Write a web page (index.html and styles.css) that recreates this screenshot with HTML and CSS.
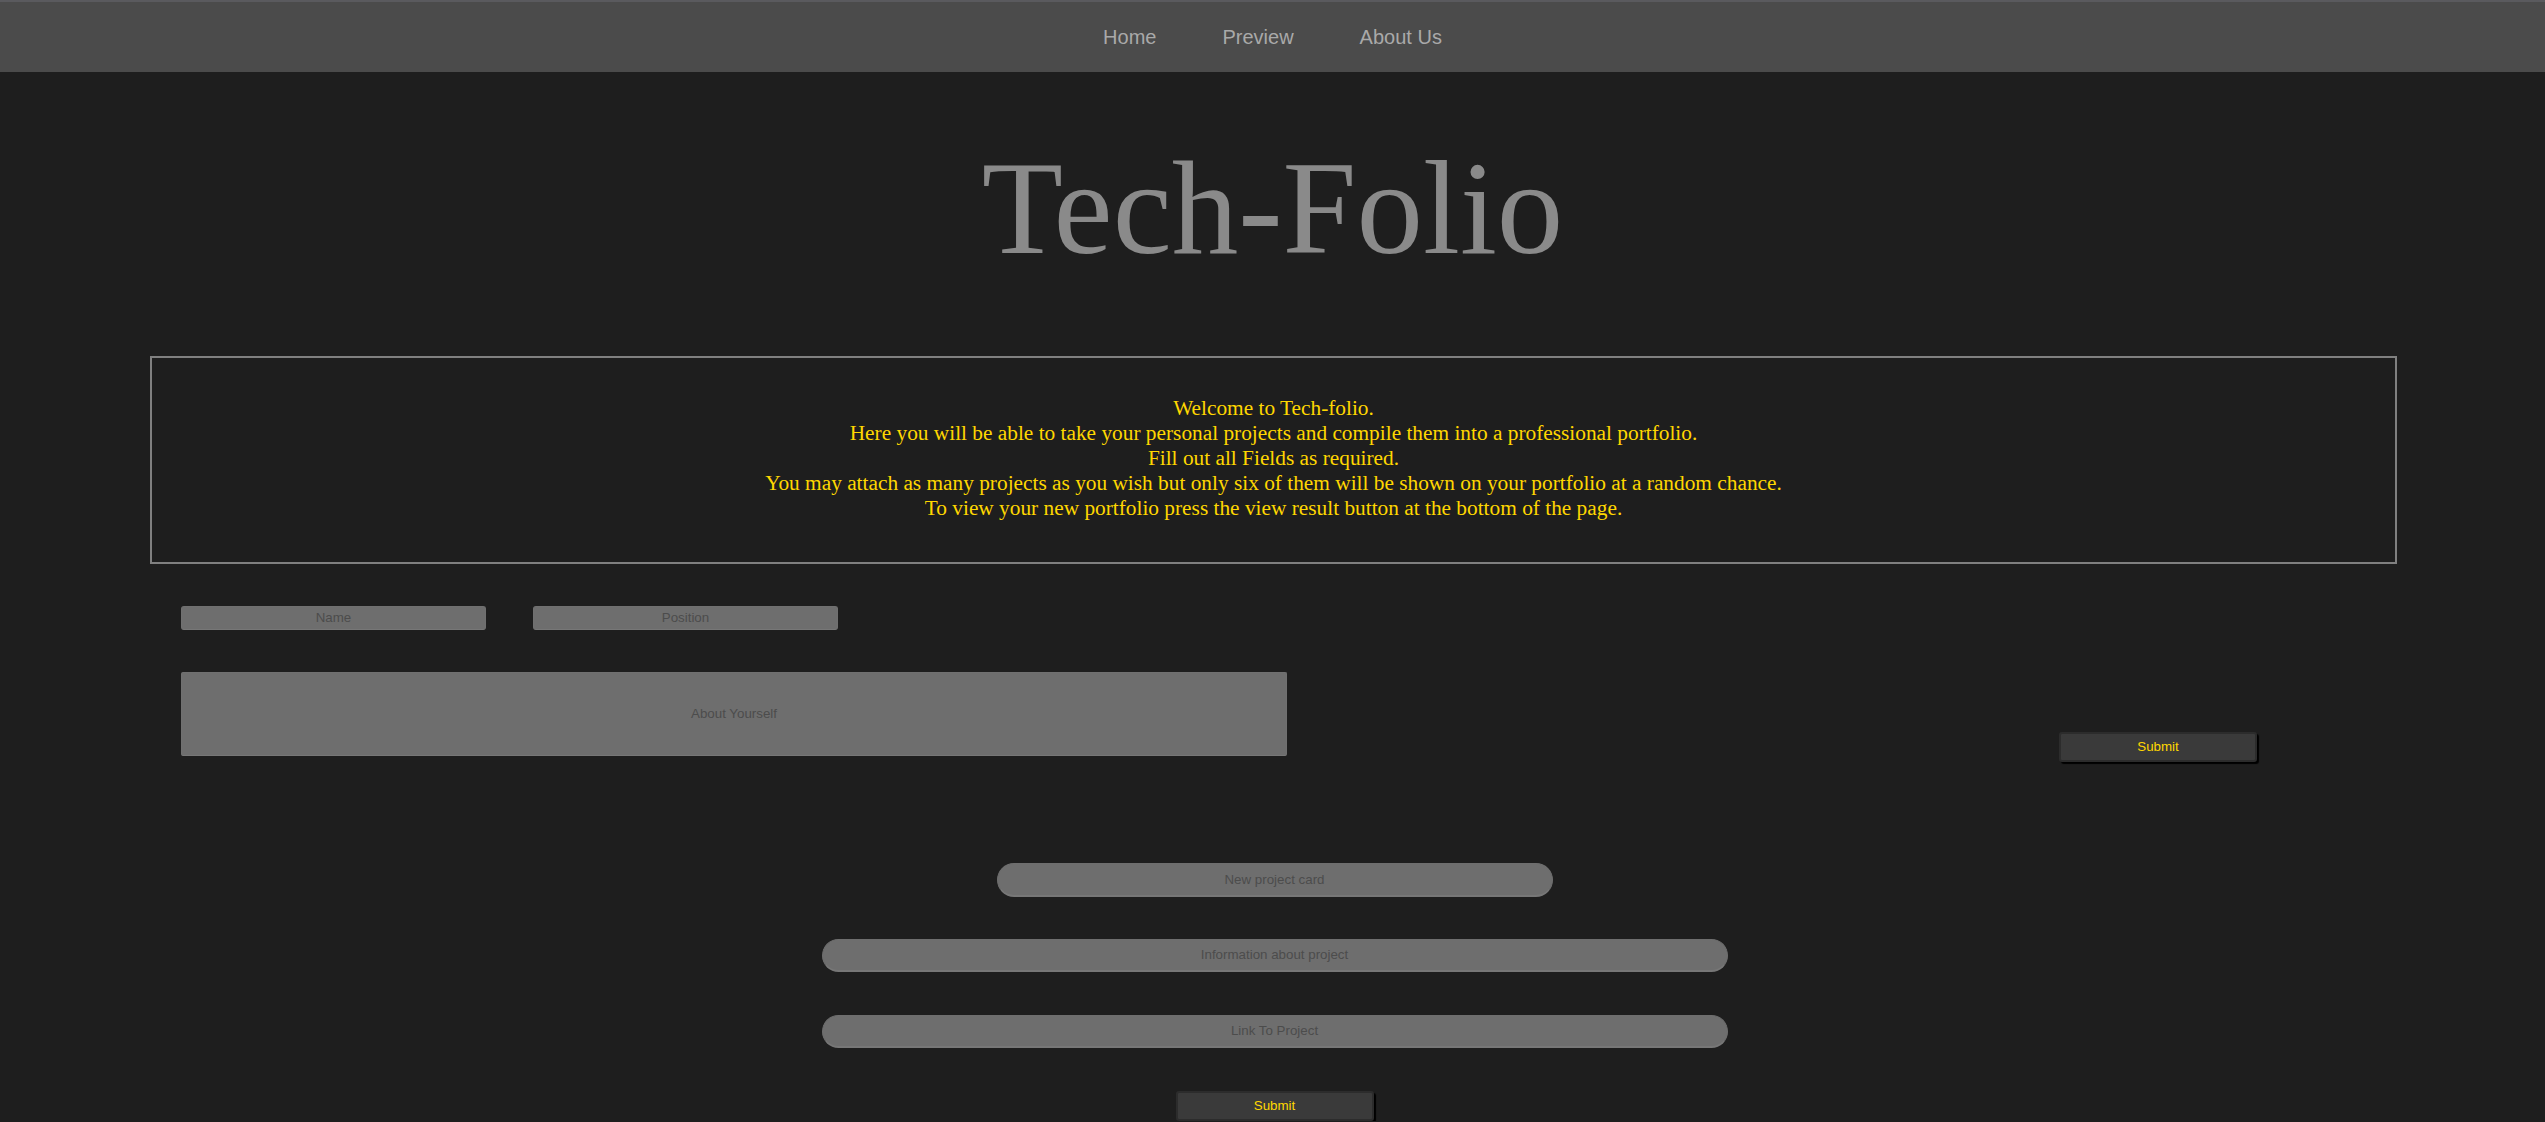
FILE: index.html
```html
<!DOCTYPE html>
<html>
<head>
<meta charset="utf-8">
<title>Tech-Folio</title>
<link rel="stylesheet" href="styles.css">
</head>
<body>
<nav class="topnav">
  <a class="navlink" href="#">Home</a>
  <a class="navlink" href="#">Preview</a>
  <a class="navlink" href="#">About Us</a>
</nav>
<h1 class="title">Tech-Folio</h1>
<section class="welcome">
  <p class="welcome-text">Welcome to Tech-folio.<br>
  Here you will be able to take your personal projects and compile them into a professional portfolio.<br>
  Fill out all Fields as required.<br>
  You may attach as many projects as you wish but only six of them will be shown on your portfolio at a random chance.<br>
  To view your new portfolio press the view result button at the bottom of the page.</p>
</section>
<form class="profile">
  <div class="row">
    <input class="field small" type="text" placeholder="Name">
    <input class="field small" type="text" placeholder="Position">
  </div>
  <div class="row about-row">
    <input class="field about" type="text" placeholder="About Yourself">
    <button class="submit submit-profile" type="button">Submit</button>
  </div>
</form>
<form class="projects">
  <input class="pill pill-short" type="text" placeholder="New project card">
  <input class="pill pill-long" type="text" placeholder="Information about project">
  <input class="pill pill-long" type="text" placeholder="Link To Project">
  <button class="submit" type="button">Submit</button>
</form>
</body>
</html>
```
FILE: styles.css
```css
html, body {
  margin: 0;
  padding: 0;
  background: #1e1e1e;
}
body {
  font-family: "Liberation Serif", "Times New Roman", serif;
  overflow: hidden;
}
.topnav {
  height: 70px;
  border-top: 2px solid #5a5a5e;
  background: #4b4b4b;
  display: flex;
  justify-content: center;
  align-items: center;
  gap: 66px;
}
.navlink {
  font-family: "Liberation Sans", Arial, sans-serif;
  font-size: 20px;
  color: #a9a9a9;
  text-decoration: none;
  padding-top: 1px;
}
.title {
  margin: 60px 0 0;
  text-align: center;
  font-weight: normal;
  font-size: 133px;
  color: #8a8a8a;
  line-height: 152px;
}
.welcome {
  margin: 72px 148px 0 150px;
  border: 2px solid #808080;
  padding: 38px 0 41px;
}
.welcome-text {
  margin: 0;
  text-align: center;
  color: #ffd700;
  font-size: 21.33px;
  line-height: 24.9px;
}
.profile {
  margin: 42px 0 0 181px;
}
.row {
  display: flex;
  gap: 47px;
}
.field {
  box-sizing: border-box;
  background: #6e6e6e;
  border: 1px solid #707070;
  border-bottom-color: #777;
  border-radius: 3px;
  font-family: "Liberation Sans", Arial, sans-serif;
  font-size: 13.333px;
  text-align: center;
  color: #333;
  padding: 0;
  outline: none;
}
.field::placeholder, .pill::placeholder {
  color: #4c4c4c;
}
.small {
  width: 305px;
  height: 24px;
}
.about-row {
  margin-top: 42px;
  gap: 0;
  align-items: flex-start;
}
.about {
  width: 1106px;
  height: 84px;
  border-radius: 2px;
}
.submit {
  box-sizing: border-box;
  width: 198px;
  height: 30px;
  background: #3a3a3a;
  border: 2px solid #2c2c2c;
  border-radius: 3px;
  box-shadow: 2px 2px 1px #000;
  font-family: "Liberation Sans", Arial, sans-serif;
  font-size: 13.333px;
  color: #ffd700;
  padding: 0;
}
.submit-profile {
  margin: 60px 0 0 772px;
}
.projects {
  margin-top: 101px;
  display: flex;
  flex-direction: column;
  align-items: center;
  padding-left: 4px;
}
.pill {
  box-sizing: border-box;
  height: 34px;
  background: #6e6e6e;
  border: 1px solid #6e6e6e;
  border-bottom: 2px solid #777;
  border-radius: 17px;
  font-family: "Liberation Sans", Arial, sans-serif;
  font-size: 13.333px;
  text-align: center;
  color: #333;
  padding: 0;
  outline: none;
  margin-bottom: 42px;
}
.pill-short {
  width: 556px;
}
.pill-long {
  width: 906px;
  height: 33px;
  margin-bottom: 43px;
}
.projects .submit {
  margin-top: 0;
}
```
